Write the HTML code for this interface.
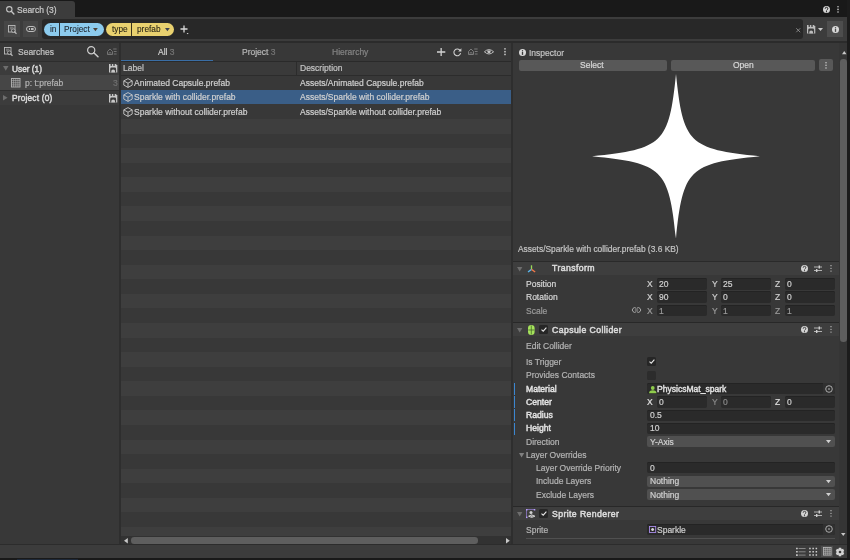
<!DOCTYPE html>
<html><head><meta charset="utf-8">
<style>
*{margin:0;padding:0;box-sizing:border-box}
html,body{width:850px;height:560px;overflow:hidden;background:#191919}
body{position:relative;font-family:"Liberation Sans",sans-serif;font-size:8.5px;color:#c4c4c4}
.a{position:absolute}
.t{position:absolute;white-space:nowrap;line-height:1;will-change:transform;-webkit-text-stroke:0.2px currentColor}
.t[style*="bold"]{-webkit-text-stroke:0}
svg{position:absolute;overflow:visible}
</style></head><body>
<div class="a" style="left:0px;top:0px;width:850px;height:17px;background:#191919;"></div>
<div class="a" style="left:0px;top:1px;width:75px;height:16px;background:#3c3c3c;border-radius:0 3px 0 0"></div>
<svg style="left:6px;top:6px" width="8.5" height="8.5" viewBox="0 0 8.5 8.5"><circle cx="3.3" cy="3.3" r="2.7" fill="none" stroke="#c4c4c4" stroke-width="1.1"/><path d="M5.3 5.3L7.9 7.9" stroke="#c4c4c4" stroke-width="1.4" stroke-linecap="round"/></svg>
<div class="t" style="left:17px;top:6px;color:#cacaca;">Search (3)</div>
<svg style="left:823px;top:6px" width="7" height="7" viewBox="0 0 7 7"><circle cx="3.5" cy="3.5" r="3.5" fill="#d4d4d4"/><path d="M2.2 2.7Q2.2 1.3 3.5 1.3Q4.8 1.3 4.8 2.6Q4.8 3.3 4 3.7Q3.5 4 3.5 4.6" fill="none" stroke="#191919" stroke-width="1"/><circle cx="3.5" cy="5.7" r="0.6" fill="#191919"/></svg>
<svg style="left:837.3px;top:5.7px" width="2" height="8" viewBox="0 0 2 8"><circle cx="1" cy="0.8" r="0.8" fill="#c8c8c8"/><circle cx="1" cy="3.4000000000000004" r="0.8" fill="#c8c8c8"/><circle cx="1" cy="6.0" r="0.8" fill="#c8c8c8"/></svg>
<div class="a" style="left:0px;top:17px;width:847px;height:24px;background:#3c3c3c;"></div>
<div class="a" style="left:4px;top:21px;width:15.8px;height:15.8px;background:#464646;"></div>
<div class="a" style="left:22.8px;top:21px;width:15.2px;height:15.8px;background:#464646;"></div>
<svg style="left:8px;top:24.5px" width="9" height="9" viewBox="0 0 9 9"><rect x="0.5" y="0.5" width="6.5" height="6.5" fill="none" stroke="#bcbcbc" stroke-width="0.9"/><path d="M2 2.2H5.5M2 3.8H4" stroke="#bcbcbc" stroke-width="0.6"/><circle cx="5.3" cy="5.6" r="1.8" fill="#464646" stroke="#bcbcbc" stroke-width="0.9"/><path d="M6.5 6.9L8.5 8.8" stroke="#bcbcbc" stroke-width="1.2"/></svg>
<svg style="left:25.5px;top:26px" width="10" height="6" viewBox="0 0 10 6"><rect x="0.5" y="0.5" width="9" height="5" rx="2.5" fill="none" stroke="#bcbcbc" stroke-width="1"/><rect x="5" y="2" width="2.6" height="2" fill="#bcbcbc"/><rect x="3" y="2" width="1" height="2" fill="#bcbcbc"/></svg>
<div class="a" style="left:42px;top:19.3px;width:761px;height:19.7px;background:#282828;border-radius:3px"></div>
<div class="a" style="left:44px;top:22.8px;width:59.8px;height:13.2px;background:#8ccbee;border-radius:6.6px"></div>
<div class="a" style="left:59.2px;top:22.8px;width:0.9px;height:13.2px;background:#26323a;"></div>
<div class="t" style="left:50px;top:25px;font-size:8.3px;color:#1f262d;-webkit-text-stroke:0.1px currentColor">in</div>
<div class="t" style="left:64px;top:25px;font-size:8.3px;color:#1f262d;-webkit-text-stroke:0.1px currentColor">Project</div>
<svg style="left:93px;top:28px" width="4.8" height="3.2" viewBox="0 0 4.8 3.2"><path d="M0 0H4.8L2.4 3.2Z" fill="#4e4238"/></svg>
<div class="a" style="left:106px;top:22.8px;width:68.4px;height:13.2px;background:#e9d16f;border-radius:6.6px"></div>
<div class="a" style="left:131.4px;top:22.8px;width:0.9px;height:13.2px;background:#3a331c;"></div>
<div class="t" style="left:111.5px;top:25px;font-size:8.3px;color:#2a2616;-webkit-text-stroke:0.1px currentColor">type</div>
<div class="t" style="left:136.5px;top:25px;font-size:8.3px;color:#2a2616;-webkit-text-stroke:0.1px currentColor">prefab</div>
<svg style="left:164.5px;top:28px" width="4.8" height="3.2" viewBox="0 0 4.8 3.2"><path d="M0 0H4.8L2.4 3.2Z" fill="#3e4350"/></svg>
<svg style="left:179.5px;top:25px" width="9" height="10" viewBox="0 0 9 10"><path d="M4 0.5V7.5M0.5 4H7.5" stroke="#d8d8d8" stroke-width="1.3"/><path d="M6.6 8H8.6L7.6 9.2Z" fill="#d8d8d8"/></svg>
<svg style="left:796px;top:28px" width="4.5" height="4.5" viewBox="0 0 4.5 4.5"><path d="M0.3 0.3L4.2 4.2M4.2 0.3L0.3 4.2" stroke="#9a9a9a" stroke-width="0.8"/></svg>
<svg style="left:807px;top:25px" width="8.3" height="8.6" viewBox="0 0 8.3 8.6"><path d="M0 0H6.8L8.3 1.5V8.6H0Z" fill="#bdbdbd"/><rect x="1.6" y="0" width="1.3" height="1.9" fill="#3c3c3c"/><rect x="4.3" y="0" width="1.4" height="1.9" fill="#3c3c3c"/><path d="M1.2 8.6V5Q1.2 3.6 2.6 3.6H5.8Q7.1 3.6 7.1 5V8.6Z" fill="#3c3c3c"/><path d="M2.3 8.6V7Q2.3 5.5 4.15 5.5Q6 5.5 6 7V8.6Z" fill="#bdbdbd"/></svg>
<svg style="left:818px;top:27.5px" width="5" height="3" viewBox="0 0 5 3"><path d="M0 0H5L2.5 3Z" fill="#c8c8c8"/></svg>
<div class="a" style="left:827.3px;top:21.2px;width:16px;height:15.8px;background:#4d4d4d;"></div>
<svg style="left:831.5px;top:25.5px" width="7" height="7" viewBox="0 0 7 7"><circle cx="3.5" cy="3.5" r="3.5" fill="#d8d8d8"/><rect x="2.85" y="2.9" width="1.3" height="3" fill="#4d4d4d"/><circle cx="3.5" cy="1.8" r="0.7" fill="#4d4d4d"/></svg>
<div class="a" style="left:0px;top:41px;width:847px;height:1.5px;background:#2b2b2b;"></div>
<div class="a" style="left:0px;top:42.5px;width:119px;height:502px;background:#383838;"></div>
<svg style="left:4px;top:47px" width="9" height="9" viewBox="0 0 9 9"><rect x="0.5" y="0.5" width="6.5" height="6.5" fill="none" stroke="#bcbcbc" stroke-width="0.9"/><path d="M2 2.2H5.5M2 3.8H4" stroke="#bcbcbc" stroke-width="0.6"/><circle cx="5.3" cy="5.6" r="1.8" fill="#383838" stroke="#bcbcbc" stroke-width="0.9"/><path d="M6.5 6.9L8.5 8.8" stroke="#bcbcbc" stroke-width="1.2"/></svg>
<div class="t" style="left:17.6px;top:48px;color:#c4c4c4;">Searches</div>
<svg style="left:87px;top:46px" width="12" height="12" viewBox="0 0 12 12"><circle cx="4.2" cy="4.2" r="3.6" fill="none" stroke="#cdcdcd" stroke-width="1.2"/><path d="M6.8 6.8L11 10.8" stroke="#cdcdcd" stroke-width="1.5" stroke-linecap="round"/></svg>
<svg style="left:107px;top:48.3px" width="10" height="7" viewBox="0 0 10 7"><path d="M0.5 6.5V3.5L3 1L5.5 3.5V6.5Z" fill="none" stroke="#7a7a7a" stroke-width="0.9"/><path d="M2 6.5V4.6H4V6.5" fill="none" stroke="#7a7a7a" stroke-width="0.6"/><path d="M6.2 1H9.6M6.8 3.5H9.6M6.8 6H9.6" stroke="#7a7a7a" stroke-width="0.9"/></svg>
<div class="a" style="left:0px;top:61.2px;width:119px;height:1px;background:#2d2d2d;"></div>
<div class="a" style="left:0px;top:62.2px;width:119px;height:13.1px;background:#3c3c3c;"></div>
<svg style="left:2.5px;top:66px" width="5.5" height="4.8" viewBox="0 0 5.5 4.8"><path d="M0 0H5.5L2.75 4.8Z" fill="#6e6e6e"/></svg>
<div class="t" style="left:12px;top:65px;font-size:8.3px;color:#d8d8d8;-webkit-text-stroke:0.5px currentColor">User (1)</div>
<svg style="left:108.8px;top:64.1px" width="8.3" height="8.6" viewBox="0 0 8.3 8.6"><path d="M0 0H6.8L8.3 1.5V8.6H0Z" fill="#c8c8c8"/><rect x="1.6" y="0" width="1.3" height="1.9" fill="#3c3c3c"/><rect x="4.3" y="0" width="1.4" height="1.9" fill="#3c3c3c"/><path d="M1.2 8.6V5Q1.2 3.6 2.6 3.6H5.8Q7.1 3.6 7.1 5V8.6Z" fill="#3c3c3c"/><path d="M2.3 8.6V7Q2.3 5.5 4.15 5.5Q6 5.5 6 7V8.6Z" fill="#c8c8c8"/></svg>
<div class="a" style="left:0px;top:75.3px;width:119px;height:14.7px;background:#464646;"></div>
<svg style="left:11px;top:78px" width="9.5" height="9.5" viewBox="0 0 9.5 9.5"><rect x="0.5" y="0.5" width="8.5" height="8.5" fill="none" stroke="#b4b4b4" stroke-width="0.9"/><path d="M2.6 0.5V9M4.75 0.5V9M6.9 0.5V9M0.5 2.6H9M0.5 4.75H9M0.5 6.9H9" stroke="#b4b4b4" stroke-width="0.6"/></svg>
<div class="t" style="left:25px;top:79px;color:#b4b4b4;">p: t:prefab</div>
<div class="t" style="left:113.2px;top:79px;color:#707070;">3</div>
<div class="a" style="left:0px;top:90px;width:119px;height:0.8px;background:#303030;"></div>
<div class="a" style="left:0px;top:90.8px;width:119px;height:14.2px;background:#3c3c3c;"></div>
<svg style="left:3px;top:94.5px" width="5" height="6" viewBox="0 0 5 6"><path d="M0 0V5.6L4.6 2.8Z" fill="#6e6e6e"/></svg>
<div class="t" style="left:12px;top:94px;font-size:8.3px;color:#d8d8d8;-webkit-text-stroke:0.5px currentColor;letter-spacing:0.2px">Project (0)</div>
<svg style="left:108.8px;top:93.6px" width="8.3" height="8.6" viewBox="0 0 8.3 8.6"><path d="M0 0H6.8L8.3 1.5V8.6H0Z" fill="#c8c8c8"/><rect x="1.6" y="0" width="1.3" height="1.9" fill="#3c3c3c"/><rect x="4.3" y="0" width="1.4" height="1.9" fill="#3c3c3c"/><path d="M1.2 8.6V5Q1.2 3.6 2.6 3.6H5.8Q7.1 3.6 7.1 5V8.6Z" fill="#3c3c3c"/><path d="M2.3 8.6V7Q2.3 5.5 4.15 5.5Q6 5.5 6 7V8.6Z" fill="#c8c8c8"/></svg>
<div class="a" style="left:119px;top:42.5px;width:2px;height:502px;background:#2e2e2e;"></div>
<div class="a" style="left:121px;top:42.5px;width:390px;height:502px;background:#383838;"></div>
<div class="t" style="left:157.5px;top:48px;color:#d2d2d2;">All <span style="color:#777">3</span></div>
<div class="t" style="left:241.5px;top:48px;color:#b8b8b8;">Project <span style="color:#777">3</span></div>
<div class="t" style="left:331.5px;top:48px;color:#858585;">Hierarchy</div>
<div class="a" style="left:121px;top:59.8px;width:92px;height:1.5px;background:#3a6ea5;"></div>
<svg style="left:436.8px;top:47.8px" width="8.3" height="8" viewBox="0 0 8.3 8"><path d="M4.15 0V8M0 4H8.3" stroke="#d2d2d2" stroke-width="1.3"/></svg>
<svg style="left:452.7px;top:48px" width="8.5" height="8.2" viewBox="0 0 8.5 8.2"><path d="M7.2 2.6A3.4 3.4 0 1 0 7.6 5.2" fill="none" stroke="#cfcfcf" stroke-width="1.1"/><path d="M8.4 0.2V3.4H5.2Z" fill="#cfcfcf"/></svg>
<svg style="left:467.8px;top:48.3px" width="10" height="7" viewBox="0 0 10 7"><path d="M0.5 6.5V3.5L3 1L5.5 3.5V6.5Z" fill="none" stroke="#858585" stroke-width="0.9"/><path d="M2 6.5V4.6H4V6.5" fill="none" stroke="#858585" stroke-width="0.6"/><path d="M6.2 1H9.6M6.8 3.5H9.6M6.8 6H9.6" stroke="#858585" stroke-width="0.9"/></svg>
<svg style="left:483.5px;top:49.3px" width="10" height="5.6" viewBox="0 0 10 5.6"><path d="M0.4 2.8Q5 -1.6 9.6 2.8Q5 7.2 0.4 2.8Z" fill="none" stroke="#c8c8c8" stroke-width="0.9"/><path d="M3.2 1.4H6.8L6.4 3.6Q5 4.8 3.6 3.6Z" fill="#c8c8c8"/></svg>
<svg style="left:503.8px;top:48px" width="2" height="8" viewBox="0 0 2 8"><circle cx="1" cy="0.85" r="0.85" fill="#c8c8c8"/><circle cx="1" cy="3.65" r="0.85" fill="#c8c8c8"/><circle cx="1" cy="6.449999999999999" r="0.85" fill="#c8c8c8"/></svg>
<div class="a" style="left:121px;top:61.3px;width:390px;height:0.8px;background:#2a2a2a;"></div>
<div class="a" style="left:121px;top:62px;width:390px;height:13.3px;background:#3a3a3a;"></div>
<div class="a" style="left:296.2px;top:62px;width:1px;height:13.3px;background:#2c2c2c;"></div>
<div class="a" style="left:121px;top:74.5px;width:390px;height:0.8px;background:#2c2c2c;"></div>
<div class="t" style="left:123px;top:64px;color:#c4c4c4;">Label</div>
<div class="t" style="left:300px;top:64px;color:#c4c4c4;">Description</div>
<svg style="left:123px;top:77.89999999999999px" width="10" height="10" viewBox="0 0 10 10"><path d="M5 0.6L9.2 2.9V7.1L5 9.4L0.8 7.1V2.9Z M0.8 2.9L5 5.2L9.2 2.9M5 5.2V9.4" fill="none" stroke="#c8c8c8" stroke-width="0.9" stroke-linejoin="round"/></svg>
<div class="t" style="left:134.2px;top:79px;color:#d0d0d0;">Animated Capsule.prefab</div>
<div class="t" style="left:299.8px;top:79px;color:#d0d0d0;">Assets/Animated Capsule.prefab</div>
<div class="a" style="left:121px;top:89.87px;width:390px;height:14.57px;background:#3a5e87;"></div>
<svg style="left:123px;top:92.47px" width="10" height="10" viewBox="0 0 10 10"><path d="M5 0.6L9.2 2.9V7.1L5 9.4L0.8 7.1V2.9Z M0.8 2.9L5 5.2L9.2 2.9M5 5.2V9.4" fill="none" stroke="#c8c8c8" stroke-width="0.9" stroke-linejoin="round"/></svg>
<div class="t" style="left:134.2px;top:93px;color:#d0d0d0;">Sparkle with collider.prefab</div>
<div class="t" style="left:299.8px;top:93px;color:#d0d0d0;">Assets/Sparkle with collider.prefab</div>
<svg style="left:123px;top:107.03999999999999px" width="10" height="10" viewBox="0 0 10 10"><path d="M5 0.6L9.2 2.9V7.1L5 9.4L0.8 7.1V2.9Z M0.8 2.9L5 5.2L9.2 2.9M5 5.2V9.4" fill="none" stroke="#c8c8c8" stroke-width="0.9" stroke-linejoin="round"/></svg>
<div class="t" style="left:134.2px;top:108px;color:#d0d0d0;">Sparkle without collider.prefab</div>
<div class="t" style="left:299.8px;top:108px;color:#d0d0d0;">Assets/Sparkle without collider.prefab</div>
<div class="a" style="left:121px;top:119.01px;width:390px;height:14.57px;background:#3e3e3e;"></div>
<div class="a" style="left:121px;top:148.15px;width:390px;height:14.57px;background:#3e3e3e;"></div>
<div class="a" style="left:121px;top:177.29px;width:390px;height:14.57px;background:#3e3e3e;"></div>
<div class="a" style="left:121px;top:206.43px;width:390px;height:14.57px;background:#3e3e3e;"></div>
<div class="a" style="left:121px;top:235.57px;width:390px;height:14.57px;background:#3e3e3e;"></div>
<div class="a" style="left:121px;top:264.71px;width:390px;height:14.57px;background:#3e3e3e;"></div>
<div class="a" style="left:121px;top:293.85px;width:390px;height:14.57px;background:#3e3e3e;"></div>
<div class="a" style="left:121px;top:322.99px;width:390px;height:14.57px;background:#3e3e3e;"></div>
<div class="a" style="left:121px;top:352.13px;width:390px;height:14.57px;background:#3e3e3e;"></div>
<div class="a" style="left:121px;top:381.27px;width:390px;height:14.57px;background:#3e3e3e;"></div>
<div class="a" style="left:121px;top:410.41px;width:390px;height:14.57px;background:#3e3e3e;"></div>
<div class="a" style="left:121px;top:439.55px;width:390px;height:14.57px;background:#3e3e3e;"></div>
<div class="a" style="left:121px;top:468.69px;width:390px;height:14.57px;background:#3e3e3e;"></div>
<div class="a" style="left:121px;top:497.83px;width:390px;height:14.57px;background:#3e3e3e;"></div>
<div class="a" style="left:121px;top:526.97px;width:390px;height:9.03px;background:#3e3e3e;"></div>
<div class="a" style="left:121px;top:536.1px;width:390px;height:8.3px;background:#323232;"></div>
<svg style="left:123.5px;top:537.5px" width="4" height="5.5" viewBox="0 0 4 5.5"><path d="M3.8 0V5.4L0 2.7Z" fill="#c8c8c8"/></svg>
<div class="a" style="left:131.4px;top:537.2px;width:346.2px;height:6.6px;background:#5e5e5e;border-radius:3.3px"></div>
<svg style="left:505.5px;top:537.5px" width="4" height="5.5" viewBox="0 0 4 5.5"><path d="M0 0V5.4L3.8 2.7Z" fill="#c8c8c8"/></svg>
<div class="a" style="left:511px;top:42.5px;width:2px;height:502px;background:#2e2e2e;"></div>
<div class="a" style="left:513px;top:42.5px;width:326px;height:502px;background:#383838;"></div>
<svg style="left:519px;top:48.5px" width="7" height="7" viewBox="0 0 7 7"><circle cx="3.5" cy="3.5" r="3.5" fill="#d8d8d8"/><rect x="2.85" y="2.9" width="1.3" height="3" fill="#383838"/><circle cx="3.5" cy="1.8" r="0.7" fill="#383838"/></svg>
<div class="t" style="left:529px;top:49px;color:#c4c4c4;">Inspector</div>
<div class="a" style="left:518.5px;top:60.1px;width:148.2px;height:10.5px;background:#585858;border-radius:2px"></div>
<div class="a" style="left:670.8px;top:60.1px;width:144px;height:10.5px;background:#585858;border-radius:2px"></div>
<div class="a" style="left:818.5px;top:59px;width:14.5px;height:12px;background:#585858;border-radius:2px"></div>
<div class="t" style="left:580px;top:61px;color:#d8d8d8;">Select</div>
<div class="t" style="left:733px;top:61px;color:#d8d8d8;">Open</div>
<svg style="left:824.9px;top:61.8px" width="2" height="8" viewBox="0 0 2 8"><circle cx="1" cy="0.75" r="0.75" fill="#d0d0d0"/><circle cx="1" cy="3.35" r="0.75" fill="#d0d0d0"/><circle cx="1" cy="5.95" r="0.75" fill="#d0d0d0"/></svg>
<svg style="left:591.55px;top:74.3px" width="168" height="164.4" viewBox="-84 -82.2 168 164.4"><path d="M0 -82.2C7 -13 13 -7 84 0C13 7 7 13 0 82.2C-7 13 -13 7 -84 0C-13 -7 -7 -13 0 -82.2Z" fill="#ffffff"/></svg>
<div class="t" style="left:518px;top:245px;font-size:8.4px;color:#c4c4c4;">Assets/Sparkle with collider.prefab (3.6 KB)</div>
<div class="a" style="left:513px;top:260.6px;width:326px;height:1.2px;background:#2a2a2a;"></div>
<div class="a" style="left:513px;top:261.8px;width:326px;height:13.4px;background:#3e3e3e;"></div>
<svg style="left:517px;top:266.6px" width="5.4" height="4.4" viewBox="0 0 5.4 4.4"><path d="M0 0H5.4L2.7 4.4Z" fill="#6e6e6e"/></svg>
<svg style="left:526.6px;top:264.5px" width="9" height="8.2" viewBox="0 0 9 8.2"><path d="M4.5 0.3V4.2" stroke="#9adb5a" stroke-width="1.3"/><path d="M4.5 4.4L1 7" stroke="#5ab8f0" stroke-width="1.3"/><path d="M4.5 4.4L8.2 7" stroke="#f07848" stroke-width="1.3"/></svg>
<div class="t" style="left:552px;top:264px;font-size:8.7px;color:#dcdcdc;-webkit-text-stroke:0.5px currentColor;letter-spacing:0.4px">Transform</div>
<svg style="left:800.6px;top:265.1px" width="7" height="7" viewBox="0 0 7 7"><circle cx="3.5" cy="3.5" r="3.5" fill="#d4d4d4"/><path d="M2.2 2.7Q2.2 1.3 3.5 1.3Q4.8 1.3 4.8 2.6Q4.8 3.3 4 3.7Q3.5 4 3.5 4.6" fill="none" stroke="#3e3e3e" stroke-width="1"/><circle cx="3.5" cy="5.7" r="0.6" fill="#3e3e3e"/></svg>
<svg style="left:814px;top:265.0px" width="8" height="7.5" viewBox="0 0 8 7.5"><path d="M0 2H8M0 5.5H8" stroke="#cfcfcf" stroke-width="0.8"/><rect x="4.6" y="0.5" width="1.4" height="3" fill="#cfcfcf"/><rect x="2" y="4" width="1.4" height="3" fill="#cfcfcf"/></svg>
<svg style="left:829.5px;top:265.1px" width="2" height="8" viewBox="0 0 2 8"><circle cx="1" cy="0.65" r="0.65" fill="#c8c8c8"/><circle cx="1" cy="3.35" r="0.65" fill="#c8c8c8"/><circle cx="1" cy="6.050000000000001" r="0.65" fill="#c8c8c8"/></svg>
<div class="t" style="left:526px;top:280px;color:#d6d6d6;">Position</div>
<div class="t" style="left:647.4px;top:280px;color:#d0d0d0;">X</div>
<div class="a" style="left:656.9px;top:278.2px;width:50.4px;height:11.6px;background:#2a2a2a;border-radius:2px;box-shadow:inset 0 0.8px 0 #222"></div>
<div class="t" style="left:659.4px;top:280px;color:#d0d0d0;">20</div>
<div class="t" style="left:711.6px;top:280px;color:#d0d0d0;">Y</div>
<div class="a" style="left:720.6px;top:278.2px;width:50.4px;height:11.6px;background:#2a2a2a;border-radius:2px;box-shadow:inset 0 0.8px 0 #222"></div>
<div class="t" style="left:723.1px;top:280px;color:#d0d0d0;">25</div>
<div class="t" style="left:775px;top:280px;color:#d0d0d0;">Z</div>
<div class="a" style="left:784.5px;top:278.2px;width:50.4px;height:11.6px;background:#2a2a2a;border-radius:2px;box-shadow:inset 0 0.8px 0 #222"></div>
<div class="t" style="left:787.0px;top:280px;color:#d0d0d0;">0</div>
<div class="t" style="left:526px;top:293px;color:#d6d6d6;">Rotation</div>
<div class="t" style="left:647.4px;top:293px;color:#d0d0d0;">X</div>
<div class="a" style="left:656.9px;top:291.3px;width:50.4px;height:11.6px;background:#2a2a2a;border-radius:2px;box-shadow:inset 0 0.8px 0 #222"></div>
<div class="t" style="left:659.4px;top:293px;color:#d0d0d0;">90</div>
<div class="t" style="left:711.6px;top:293px;color:#d0d0d0;">Y</div>
<div class="a" style="left:720.6px;top:291.3px;width:50.4px;height:11.6px;background:#2a2a2a;border-radius:2px;box-shadow:inset 0 0.8px 0 #222"></div>
<div class="t" style="left:723.1px;top:293px;color:#d0d0d0;">0</div>
<div class="t" style="left:775px;top:293px;color:#d0d0d0;">Z</div>
<div class="a" style="left:784.5px;top:291.3px;width:50.4px;height:11.6px;background:#2a2a2a;border-radius:2px;box-shadow:inset 0 0.8px 0 #222"></div>
<div class="t" style="left:787.0px;top:293px;color:#d0d0d0;">0</div>
<div class="t" style="left:526px;top:307px;color:#9a9a9a;">Scale</div>
<svg style="left:632px;top:306.5px" width="9" height="6" viewBox="0 0 9 6"><path d="M4.2 1.3A2.3 2.3 0 1 0 4.2 4.7M4.8 1.3A2.3 2.3 0 1 1 4.8 4.7" fill="none" stroke="#a8a8a8" stroke-width="1"/><path d="M2.8 3H6.2" stroke="#a8a8a8" stroke-width="0.9"/></svg>
<div class="t" style="left:647.4px;top:307px;color:#9a9a9a;">X</div>
<div class="a" style="left:656.9px;top:304.5px;width:50.4px;height:11.6px;background:#2a2a2a;border-radius:2px;box-shadow:inset 0 0.8px 0 #222"></div>
<div class="t" style="left:659.4px;top:307px;color:#9a9a9a;">1</div>
<div class="t" style="left:711.6px;top:307px;color:#9a9a9a;">Y</div>
<div class="a" style="left:720.6px;top:304.5px;width:50.4px;height:11.6px;background:#2a2a2a;border-radius:2px;box-shadow:inset 0 0.8px 0 #222"></div>
<div class="t" style="left:723.1px;top:307px;color:#9a9a9a;">1</div>
<div class="t" style="left:775px;top:307px;color:#9a9a9a;">Z</div>
<div class="a" style="left:784.5px;top:304.5px;width:50.4px;height:11.6px;background:#2a2a2a;border-radius:2px;box-shadow:inset 0 0.8px 0 #222"></div>
<div class="t" style="left:787.0px;top:307px;color:#9a9a9a;">1</div>
<div class="a" style="left:513px;top:321.8px;width:326px;height:1px;background:#282828;"></div>
<div class="a" style="left:513px;top:322.8px;width:326px;height:13.1px;background:#3e3e3e;"></div>
<svg style="left:517px;top:327.6px" width="5.4" height="4.4" viewBox="0 0 5.4 4.4"><path d="M0 0H5.4L2.7 4.4Z" fill="#6e6e6e"/></svg>
<svg style="left:527.8px;top:325.2px" width="6.6" height="10" viewBox="0 0 6.6 10"><rect x="0" y="0" width="6.6" height="10" rx="3.3" fill="#a6e35c"/><path d="M3.3 0.5V9.5M0.3 5H6.3" stroke="#3b5a22" stroke-width="0.7"/></svg>
<div class="a" style="left:539px;top:325.0px;width:9px;height:9.2px;background:#262626;border-radius:1.5px"></div>
<svg style="left:540.6px;top:327.2px" width="6" height="5" viewBox="0 0 6 5"><path d="M0.5 2.6L2.2 4.2L5.4 0.6" fill="none" stroke="#e8e8e8" stroke-width="1.1"/></svg>
<div class="t" style="left:552px;top:326px;font-size:8.7px;color:#dcdcdc;-webkit-text-stroke:0.5px currentColor;letter-spacing:0.4px">Capsule Collider</div>
<svg style="left:800.6px;top:326.1px" width="7" height="7" viewBox="0 0 7 7"><circle cx="3.5" cy="3.5" r="3.5" fill="#d4d4d4"/><path d="M2.2 2.7Q2.2 1.3 3.5 1.3Q4.8 1.3 4.8 2.6Q4.8 3.3 4 3.7Q3.5 4 3.5 4.6" fill="none" stroke="#3e3e3e" stroke-width="1"/><circle cx="3.5" cy="5.7" r="0.6" fill="#3e3e3e"/></svg>
<svg style="left:814px;top:326.0px" width="8" height="7.5" viewBox="0 0 8 7.5"><path d="M0 2H8M0 5.5H8" stroke="#cfcfcf" stroke-width="0.8"/><rect x="4.6" y="0.5" width="1.4" height="3" fill="#cfcfcf"/><rect x="2" y="4" width="1.4" height="3" fill="#cfcfcf"/></svg>
<svg style="left:829.5px;top:326.1px" width="2" height="8" viewBox="0 0 2 8"><circle cx="1" cy="0.65" r="0.65" fill="#c8c8c8"/><circle cx="1" cy="3.35" r="0.65" fill="#c8c8c8"/><circle cx="1" cy="6.050000000000001" r="0.65" fill="#c8c8c8"/></svg>
<div class="t" style="left:526px;top:342px;color:#b4b4b4;">Edit Collider</div>
<div class="t" style="left:526px;top:358px;color:#b4b4b4;">Is Trigger</div>
<div class="a" style="left:647px;top:357.2px;width:9px;height:9.2px;background:#262626;border-radius:1.5px"></div>
<svg style="left:648.6px;top:359.4px" width="6" height="5" viewBox="0 0 6 5"><path d="M0.5 2.6L2.2 4.2L5.4 0.6" fill="none" stroke="#e8e8e8" stroke-width="1.1"/></svg>
<div class="t" style="left:526px;top:371px;color:#b4b4b4;">Provides Contacts</div>
<div class="a" style="left:647px;top:370.8px;width:9px;height:9.2px;background:#2c2c2c;border-radius:1.5px"></div>
<div class="a" style="left:513.6px;top:382.6px;width:1.4px;height:12.2px;background:#3b86d0;"></div>
<div class="a" style="left:513.6px;top:396px;width:1.4px;height:12.2px;background:#3b86d0;"></div>
<div class="a" style="left:513.6px;top:409.3px;width:1.4px;height:12.2px;background:#3b86d0;"></div>
<div class="a" style="left:513.6px;top:422.6px;width:1.4px;height:12.2px;background:#3b86d0;"></div>
<div class="t" style="left:526px;top:385px;font-size:8.6px;color:#e2e2e2;-webkit-text-stroke:0.45px currentColor">Material</div>
<div class="a" style="left:647px;top:383px;width:187.7px;height:11.1px;background:#2a2a2a;border-radius:2px;box-shadow:inset 0 0.8px 0 #222"></div>
<svg style="left:648.8px;top:385.6px" width="7.5" height="7.2" viewBox="0 0 7.5 7.2"><circle cx="3.75" cy="2" r="1.9" fill="#8fcb4c"/><path d="M0 7.2Q0 4.2 3.75 4.2Q7.5 4.2 7.5 7.2Z" fill="#8fcb4c"/></svg>
<div class="t" style="left:657.3px;top:385px;font-size:8.55px;color:#e2e2e2;-webkit-text-stroke:0.4px currentColor">PhysicsMat_spark</div>
<div class="a" style="left:823px;top:383px;width:11.7px;height:11.1px;background:#303030;border-radius:0 2px 2px 0"></div>
<svg style="left:824.8px;top:384.6px" width="8" height="8" viewBox="0 0 8 8"><circle cx="4" cy="4" r="3.3" fill="none" stroke="#c8c8c8" stroke-width="0.8"/><circle cx="4" cy="4" r="0.8" fill="#c8c8c8"/></svg>
<div class="t" style="left:526px;top:398px;font-size:8.6px;color:#e2e2e2;-webkit-text-stroke:0.45px currentColor">Center</div>
<div class="t" style="left:647.4px;top:398px;color:#e0e0e0;">X</div>
<div class="a" style="left:656.9px;top:396.2px;width:50.4px;height:11.6px;background:#2a2a2a;border-radius:2px;box-shadow:inset 0 0.8px 0 #222"></div>
<div class="t" style="left:659.4px;top:398px;color:#d0d0d0;">0</div>
<div class="t" style="left:711.6px;top:398px;color:#8a8a8a;">Y</div>
<div class="a" style="left:720.6px;top:396.2px;width:50.4px;height:11.6px;background:#2a2a2a;border-radius:2px;box-shadow:inset 0 0.8px 0 #222"></div>
<div class="t" style="left:723.1px;top:398px;color:#8a8a8a;">0</div>
<div class="t" style="left:775px;top:398px;color:#e0e0e0;">Z</div>
<div class="a" style="left:784.5px;top:396.2px;width:50.4px;height:11.6px;background:#2a2a2a;border-radius:2px;box-shadow:inset 0 0.8px 0 #222"></div>
<div class="t" style="left:787.0px;top:398px;color:#d0d0d0;">0</div>
<div class="t" style="left:526px;top:411px;font-size:8.6px;color:#e2e2e2;-webkit-text-stroke:0.45px currentColor">Radius</div>
<div class="a" style="left:647px;top:409.6px;width:187.7px;height:11.1px;background:#2a2a2a;border-radius:2px;box-shadow:inset 0 0.8px 0 #222"></div>
<div class="t" style="left:649.5px;top:411px;color:#d0d0d0;">0.5</div>
<div class="t" style="left:526px;top:424px;font-size:8.6px;color:#e2e2e2;-webkit-text-stroke:0.45px currentColor">Height</div>
<div class="a" style="left:647px;top:422.7px;width:187.7px;height:11.1px;background:#2a2a2a;border-radius:2px;box-shadow:inset 0 0.8px 0 #222"></div>
<div class="t" style="left:649.5px;top:424px;color:#d0d0d0;">10</div>
<div class="t" style="left:526px;top:438px;color:#b4b4b4;">Direction</div>
<div class="a" style="left:647px;top:436.2px;width:187.7px;height:10.5px;background:#505050;border-radius:2px"></div>
<div class="t" style="left:649.5px;top:438px;color:#d0d0d0;">Y-Axis</div>
<svg style="left:826px;top:439.8px" width="5" height="3.2" viewBox="0 0 5 3.2"><path d="M0 0H5L2.5 3.2Z" fill="#d0d0d0"/></svg>
<svg style="left:518.8px;top:452.8px" width="5.2" height="4.6" viewBox="0 0 5.2 4.6"><path d="M0 0H5.2L2.6 4.6Z" fill="#808080"/></svg>
<div class="t" style="left:526px;top:451px;color:#b4b4b4;">Layer Overrides</div>
<div class="t" style="left:536.4px;top:464px;color:#b4b4b4;">Layer Override Priority</div>
<div class="a" style="left:647px;top:462.4px;width:187.7px;height:11.1px;background:#2a2a2a;border-radius:2px;box-shadow:inset 0 0.8px 0 #222"></div>
<div class="t" style="left:649.5px;top:464px;color:#d0d0d0;">0</div>
<div class="t" style="left:536.4px;top:477px;color:#b4b4b4;">Include Layers</div>
<div class="a" style="left:647px;top:476px;width:187.7px;height:10.5px;background:#505050;border-radius:2px"></div>
<div class="t" style="left:649.5px;top:477px;color:#d0d0d0;">Nothing</div>
<svg style="left:826px;top:479.6px" width="5" height="3.2" viewBox="0 0 5 3.2"><path d="M0 0H5L2.5 3.2Z" fill="#d0d0d0"/></svg>
<div class="t" style="left:536.4px;top:491px;color:#b4b4b4;">Exclude Layers</div>
<div class="a" style="left:647px;top:489px;width:187.7px;height:10.5px;background:#505050;border-radius:2px"></div>
<div class="t" style="left:649.5px;top:491px;color:#d0d0d0;">Nothing</div>
<svg style="left:826px;top:492.6px" width="5" height="3.2" viewBox="0 0 5 3.2"><path d="M0 0H5L2.5 3.2Z" fill="#d0d0d0"/></svg>
<div class="a" style="left:513px;top:506px;width:326px;height:1px;background:#282828;"></div>
<div class="a" style="left:513px;top:507px;width:326px;height:13px;background:#3e3e3e;"></div>
<svg style="left:517px;top:511.8px" width="5.4" height="4.4" viewBox="0 0 5.4 4.4"><path d="M0 0H5.4L2.7 4.4Z" fill="#6e6e6e"/></svg>
<svg style="left:526.3px;top:509.2px" width="10" height="9" viewBox="0 0 10 9"><path d="M0.5 0.5H8.5M0.5 0.5V8.3" stroke="#9a82d8" stroke-width="0.7"/><rect x="0" y="0" width="1.5" height="1.5" fill="#b59cf5"/><rect x="7.8" y="0" width="1.5" height="1.5" fill="#b59cf5"/><rect x="0" y="7.6" width="1.5" height="1.5" fill="#b59cf5"/><circle cx="5" cy="3.6" r="1.5" fill="#cfcfcf"/><path d="M2.6 7.2Q5.6 4.6 8.9 7.2Q5.6 9.6 2.6 7.2Z" fill="none" stroke="#d8d8d8" stroke-width="1"/><circle cx="5.8" cy="7.2" r="0.8" fill="#d8d8d8"/></svg>
<div class="a" style="left:539px;top:509.2px;width:9px;height:9.2px;background:#262626;border-radius:1.5px"></div>
<svg style="left:540.6px;top:511.4px" width="6" height="5" viewBox="0 0 6 5"><path d="M0.5 2.6L2.2 4.2L5.4 0.6" fill="none" stroke="#e8e8e8" stroke-width="1.1"/></svg>
<div class="t" style="left:552px;top:510px;font-size:8.7px;color:#dcdcdc;-webkit-text-stroke:0.5px currentColor;letter-spacing:0.4px">Sprite Renderer</div>
<svg style="left:800.6px;top:510.3px" width="7" height="7" viewBox="0 0 7 7"><circle cx="3.5" cy="3.5" r="3.5" fill="#d4d4d4"/><path d="M2.2 2.7Q2.2 1.3 3.5 1.3Q4.8 1.3 4.8 2.6Q4.8 3.3 4 3.7Q3.5 4 3.5 4.6" fill="none" stroke="#3e3e3e" stroke-width="1"/><circle cx="3.5" cy="5.7" r="0.6" fill="#3e3e3e"/></svg>
<svg style="left:814px;top:510.2px" width="8" height="7.5" viewBox="0 0 8 7.5"><path d="M0 2H8M0 5.5H8" stroke="#cfcfcf" stroke-width="0.8"/><rect x="4.6" y="0.5" width="1.4" height="3" fill="#cfcfcf"/><rect x="2" y="4" width="1.4" height="3" fill="#cfcfcf"/></svg>
<svg style="left:829.5px;top:510.3px" width="2" height="8" viewBox="0 0 2 8"><circle cx="1" cy="0.65" r="0.65" fill="#c8c8c8"/><circle cx="1" cy="3.35" r="0.65" fill="#c8c8c8"/><circle cx="1" cy="6.050000000000001" r="0.65" fill="#c8c8c8"/></svg>
<div class="t" style="left:526px;top:526px;color:#b4b4b4;">Sprite</div>
<div class="a" style="left:647px;top:523.7px;width:187.7px;height:11.1px;background:#2a2a2a;border-radius:2px;box-shadow:inset 0 0.8px 0 #222"></div>
<svg style="left:649px;top:526px" width="7.2" height="7" viewBox="0 0 7.2 7"><rect x="0.5" y="0.5" width="6.2" height="6" fill="none" stroke="#a88be8" stroke-width="0.9"/><circle cx="3.6" cy="3.5" r="1.5" fill="#dcdcdc"/></svg>
<div class="t" style="left:657.3px;top:526px;color:#d0d0d0;">Sparkle</div>
<div class="a" style="left:823px;top:523.7px;width:11.7px;height:11.1px;background:#303030;border-radius:0 2px 2px 0"></div>
<svg style="left:824.8px;top:525.3px" width="8" height="8" viewBox="0 0 8 8"><circle cx="4" cy="4" r="3.3" fill="none" stroke="#c8c8c8" stroke-width="0.8"/><circle cx="4" cy="4" r="0.8" fill="#c8c8c8"/></svg>
<div class="a" style="left:526px;top:537.5px;width:308.7px;height:1.2px;background:#505050;"></div>
<div class="a" style="left:839px;top:42.5px;width:8px;height:502px;background:#353535;"></div>
<svg style="left:841.5px;top:51px" width="4.5" height="3.2" viewBox="0 0 4.5 3.2"><path d="M0 3.2H4.5L2.25 0Z" fill="#c8c8c8"/></svg>
<div class="a" style="left:840.2px;top:59.3px;width:6.6px;height:282.7px;background:#5e5e5e;border-radius:3.3px"></div>
<svg style="left:841.3px;top:532.5px" width="4.5" height="3" viewBox="0 0 4.5 3"><path d="M0 0H4.5L2.25 3Z" fill="#c8c8c8"/></svg>
<div class="a" style="left:0px;top:544.4px;width:847px;height:13.3px;background:#3c3c3c;"></div>
<div class="a" style="left:847px;top:0px;width:3px;height:560px;background:#1c1c1c;"></div>
<div class="a" style="left:0px;top:557.7px;width:850px;height:2.3px;background:#191919;"></div>
<div class="a" style="left:17px;top:558.9px;width:60.6px;height:1.1px;background:#1d2838;"></div>
<div class="a" style="left:0px;top:544.2px;width:847px;height:0.9px;background:#2c2c2c;"></div>
<svg style="left:795.5px;top:546.5px" width="10" height="9.5" viewBox="0 0 10 9.5"><path d="M0.1 1.5H1.7M0.1 4.8H1.7M0.1 8.1H1.7" stroke="#d0d0d0" stroke-width="1.6"/><path d="M2.6 1.5H9.6M2.6 4.8H9.6M2.6 8.1H9.6" stroke="#a8a8a8" stroke-width="0.7"/></svg>
<svg style="left:808.7px;top:546.5px" width="9" height="9.5" viewBox="0 0 9 9.5"><path d="M0.2 1.5H1.7M3.4 1.5H4.9M6.6 1.5H8.1M0.2 4.8H1.7M3.4 4.8H4.9M6.6 4.8H8.1M0.2 8.1H1.7M3.4 8.1H4.9M6.6 8.1H8.1" stroke="#d0d0d0" stroke-width="1.5"/></svg>
<div class="a" style="left:821px;top:545.5px;width:11.5px;height:11.5px;background:#4d4d4d;"></div>
<svg style="left:822.5px;top:547px" width="8.5" height="8.5" viewBox="0 0 8.5 8.5"><rect x="0.4" y="0.4" width="7.7" height="7.7" fill="none" stroke="#bcbcbc" stroke-width="0.8"/><path d="M2.3 0.4V8.1M4.25 0.4V8.1M6.2 0.4V8.1M0.4 2.3H8.1M0.4 4.25H8.1M0.4 6.2H8.1" stroke="#bcbcbc" stroke-width="0.6"/></svg>
<svg style="left:834.75px;top:546.5px" width="10" height="10" viewBox="0 0 10 10"><path d="M3.48 2.07 L3.83 0.76 L6.17 0.76 L6.52 2.07 L6.77 2.22 L8.09 1.86 L9.26 3.90 L8.30 4.86 L8.30 5.14 L9.26 6.10 L8.09 8.14 L6.77 7.78 L6.52 7.93 L6.17 9.24 L3.83 9.24 L3.48 7.93 L3.23 7.78 L1.91 8.14 L0.74 6.10 L1.70 5.14 L1.70 4.86 L0.74 3.90 L1.91 1.86 L3.23 2.22Z" fill="#d2d2d2"/><circle cx="5" cy="5" r="1.3" fill="#3c3c3c"/></svg>
</body></html>
